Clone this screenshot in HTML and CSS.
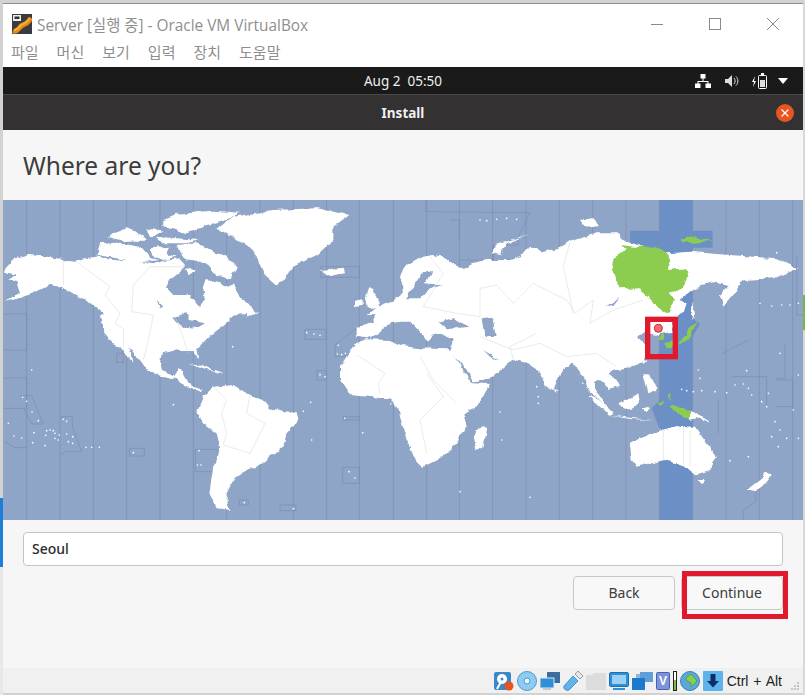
FILE: index.html
```html
<!DOCTYPE html>
<html lang="en">
<head>
    <meta charset="UTF-8">
    <title>Server [실행 중] - Oracle VM VirtualBox</title>
    <link rel="stylesheet" href="styles.css">
</head>
<body>
<div class="window">
    <div class="titlebar">
        <svg class="app-icon" width="20" height="20" viewBox="0 0 20 20">
            <rect width="20" height="20" fill="#3a3a42"/>
            <path d="M1 17 C6 19 7 12 11 11 C14 10 16 9 19 4" fill="none" stroke="#e8861a" stroke-width="5"/>
            <path d="M2 16 C6 17 7 11 11 10 C14 9 15 8 18 4" fill="none" stroke="#f6b52c" stroke-width="2"/>
            <rect x="1" y="1" width="8" height="6" fill="#eee"/>
            <rect x="2.500" y="2.500" width="5" height="2.500" fill="#333"/>
        </svg>
        <span class="app-title">Server [실행 중] - Oracle VM VirtualBox</span>
        <div class="win-btns">
            <svg width="12" height="12" viewBox="0 0 12 12"><path d="M0 6.500H12" stroke="#8a8a8a"/></svg>
            <svg width="12" height="12" viewBox="0 0 12 12"><rect x=".5" y=".5" width="11" height="11" fill="none" stroke="#8a8a8a"/></svg>
            <svg width="12" height="12" viewBox="0 0 12 12"><path d="M0 0L12 12M12 0L0 12" stroke="#8a8a8a"/></svg>
        </div>
    </div>
    <ul class="menubar">
        <li>파일</li>
        <li>머신</li>
        <li>보기</li>
        <li>입력</li>
        <li>장치</li>
        <li>도움말</li>
    </ul>

    <div class="topbar">
        <span></span>
        <span class="clock">Aug 2&nbsp; 05:50</span>
        <div class="tray">
            <svg width="16" height="14" viewBox="0 0 16 14"><path d="M5.500 0h5v4.500h-5zM0 9.500h5.500V14H0zM10.500 9.500H16V14h-5.500zM7.500 4.500h1v2.500h5v2.500h-1V8h-9v1.500h-1V7h5z" fill="#fff"/></svg>
            <svg width="14" height="12" viewBox="0 0 14 12"><path d="M0 4h3l4-4v12L3 8H0z" fill="#ddd"/><path d="M9 3c1.500 1.500 1.500 4.500 0 6M11 1.500c2.500 2.500 2.500 6.500 0 9" fill="none" stroke="#ddd"/></svg>
            <svg width="15" height="16" viewBox="0 0 15 16"><path d="M3 3L0 9h2l-1 5 3-6H2z" fill="#fff"/><rect x="6.500" y="2.500" width="8" height="13" rx="1" fill="none" stroke="#fff"/><rect x="9" y="0" width="3" height="2" fill="#fff"/><rect x="8" y="7" width="5" height="7" fill="#ddd"/></svg>
            <svg width="10" height="6" viewBox="0 0 10 6"><path d="M0 0H10L5 6Z" fill="#fff"/></svg>
        </div>
    </div>
    <div class="headerbar">
        <span></span>
        <span class="install-title">Install</span>
        <span class="close-dot">
            <svg width="8" height="8" viewBox="0 0 8 8"><path d="M.5 .5L7.500 7.500M7.500 .5L.5 7.500" stroke="#fff" stroke-width="1.300"/></svg>
        </span>
    </div>

    <div class="content">
        <h1>Where are you?</h1>

        <svg class="map" width="800" height="320" viewBox="9 0 2400 960">
            <defs>
                <filter id="rough" x="0" y="0" width="100%" height="100%" filterUnits="userSpaceOnUse" color-interpolation-filters="sRGB">
                    <feTurbulence type="fractalNoise" baseFrequency="0.035" numOctaves="4" seed="4" result="n"/>
                    <feDisplacementMap in="SourceGraphic" in2="n" scale="16" xChannelSelector="R" yChannelSelector="G"/>
                </filter>
            </defs>
            <rect class="ocean" x="9" y="0" width="2400" height="960"/>
            <g transform="translate(1200 0)">
                <path class="zone" d="M778 0H878V960H778Z M690 92H938V143H690Z M878 355L900 372L878 410Z M755 625L780 600H878V660L866 705L780 690Z"/>
            </g>
            <path class="tz" d="M80 0V960M180 0V960M280 0V960M380 0V960M480 0V960M580 0V960M680 0V960M780 0V960M880 0V960M980 0V960M1078 0V960M1180 0V960M1280 0V960M1378 0V960M1478 0V960M1578 0V960M1678 0V960M1778 0V960M1878 0V960M1978 0V960M2078 0V960M2178 0V960M2278 0V960M2378 0V960"/>
            <path class="tz" d="M9 342H80V450H9M9 534H80V625H9M60 587H95L130 672H95L70 625M182 650H217V680M217 680L245 755H195L182 765M15 725L45 743H80M350 460H370V487H350ZM388 745H433V768H388ZM586 748H655M586 748V815H635M915 388H978V418H915ZM950 512H978V540H950ZM1030 650H1078V660H1030ZM1028 802H1078V850H1028ZM1005 435L1070 385M1005 435V470H1040M962 200H1078V232H962ZM840 915H888V932H840ZM718 900H745V915H718Z"/>
            <path class="tz" d="M1278 0V35L1590 38L1555 110V135H1480V180H1378M1378 120V60H1350M2390 170V345H2478M2325 540H2378V620H2325M2195 530H2300V620M2355 430V535H2328M2155 600V700M2268 860V905L2230 930V960M2168 460L2245 420"/>

            <g filter="url(#rough)">
                <g class="land">
                    <!-- americas -->
                    <path d="M12 210L45 175L90 162L190 178L225 182L255 175L290 170L340 180L400 185L470 190L490 182L540 178L558 198L545 212L510 240L498 262L520 285L570 285L600 320L615 300L610 270L620 240L660 250L690 262L702 250L718 290L750 312L760 340L720 340L700 350L680 370L640 400L620 420L590 450L595 478L575 450L530 450L490 460L478 480L490 510L520 528L535 505L548 510L575 560L610 570L602 578L560 560L520 535L480 530L440 510L420 480L385 440L400 490L360 440L340 430L310 395L300 350L312 342L260 300L230 285L180 260L150 255L100 280L40 300L15 305L60 280L50 250L20 240L50 225L15 215Z"/>
                    <path d="M590 630L610 590L640 560L700 555L740 580L790 600L810 625L890 640L895 660L860 700L850 740L810 770L770 800L740 810L700 840L680 880L680 915L692 930L650 925L628 880L640 800L660 740L650 700L620 680L590 640Z"/>
                    <path d="M650 85L700 50L820 30L950 25L1045 45L1000 80L1000 120L960 160L930 175L880 200L850 240L830 255L795 225L770 170L740 130L680 105Z"/>
                    <path d="M965 210L1030 203L1035 220L990 228Z"/>
                    <path d="M530 135L590 130L640 155L680 170L715 205L695 215L690 238L650 225L630 200L590 180L560 175L540 160Z"/>
                    <path d="M300 130L340 125L420 140L450 175L480 180L400 190L350 175L290 165Z"/>
                    <path d="M490 60L530 45L600 35L640 32L720 38L690 55L640 70L600 85L560 100L510 85L490 75Z"/>
                    <path d="M320 110L340 100L380 85L430 105L440 125L380 125Z"/>
                    <path d="M470 110L530 115L600 120L560 130L480 130Z"/>
                    <path d="M450 145L510 140L500 160L530 170L490 180L450 165Z"/>
                    <path d="M440 85L490 95L450 112ZM560 205L590 210L570 225ZM745 315L775 340L740 350Z"/>
                    <path d="M565 490L610 495L650 515L600 500ZM645 510L670 518L645 518Z"/>
                    <path d="M1065 300L1088 295L1088 315L1065 318ZM1095 290L1105 265L1120 270L1140 320L1100 325Z"/>
                </g>
                <g class="land" transform="translate(1200 0)">
                    <!-- eurasia, africa, oceania -->
                    <path d="M-130 380L-100 375L-80 365L-70 345L-100 345L-70 320L-30 305L0 290L10 260L0 230L20 195L60 172L100 165L130 170L160 195L200 205L215 190L260 180L330 180L365 170L390 140L415 150L425 160L465 150L510 125L590 100L650 100L680 125L800 160L870 155L990 165L1060 170L1130 175L1195 205L1160 220L1120 235L1025 240L1000 285L970 320L960 285L985 255L950 245L905 255L865 280L838 300L860 310L850 340L830 355L820 365L815 395L770 405L730 395L715 410L745 440L730 490L690 505L650 510L625 520L650 540L660 560L625 570L600 540L585 550L590 575L625 625L590 590L570 575L555 535L520 490L480 520L460 570L440 560L415 510L385 490L340 480L325 490L280 530L220 548L195 500L150 455L165 415L100 400L85 425L65 400L30 365L0 365L-30 370L-60 395L-95 415L-130 410Z"/>
                    <path d="M-180 500L-135 430L-100 418L-30 420L0 437L60 445L145 448L165 470L215 550L270 552L232 620L190 640L200 680L160 740L130 770L70 800L50 790L20 720L10 690L-5 625L-30 595L-100 590L-150 585L-180 540Z"/>
                    <path d="M275 160L290 135L385 102L320 130L300 165ZM540 60L575 55L600 75L555 80ZM220 720L230 690L262 680L250 740L225 748Z"/>
                    <path d="M690 730L750 700L790 690L830 675L870 680L885 680L920 730L950 770L930 810L885 825L850 800L830 790L790 780L710 800L695 780Z"/>
                    <path d="M1040 870L1085 835L1100 815L1115 825L1085 860L1060 875ZM892 840L915 840L905 855Z"/>
                    <path d="M565 585L600 600L640 640L625 645ZM625 645L700 655L760 660L690 657ZM655 610L715 580L720 610L690 630ZM730 520L745 520L770 570L745 580ZM725 625L750 620L740 640ZM870 630L930 665L890 655L870 660ZM875 305L885 340L878 360L872 340ZM460 565L472 570L466 582ZM732 480L742 482L733 495Z"/>
                </g>
                <g class="water" transform="translate(1200 0)">
                    <path d="M15 295L40 260L70 215L100 210L75 250L125 255L85 270L60 295Z"/>
                    <path d="M115 365L165 355L205 380L140 388Z"/>
                    <path d="M245 355L280 350L290 410L255 412Z"/>
                    <path d="M250 450L300 482L270 470Z"/>
                    <path d="M620 318L660 290L640 315Z"/>
                </g>
                <path class="water" d="M470 300L490 320L480 325ZM520 350L560 340L570 360L615 370L590 385L560 380L545 380Z"/>
                <g transform="translate(1200 0)">
                    <path class="green" d="M665 135L700 140L760 140L790 150L815 180L800 210L860 205L865 230L850 260L810 280L825 300L805 335L790 335L750 300L720 262L660 265L635 210L640 175L680 150Z"/>
                    <path class="green" d="M845 115L890 112L935 122L885 128L850 125ZM772 420L790 400L795 420L775 425ZM795 430L820 420L815 440L800 445ZM835 425L860 405L870 380L895 365L880 390L868 420L840 430ZM805 615L870 630L870 660L830 640ZM775 605L790 600L785 615ZM805 585L815 580L812 600Z"/>
                </g>
            </g>

            <path class="border" d="M190 178V255M225 182L330 260L315 285L360 340L345 370L370 385L370 440M400 255L395 335L460 345L445 420L430 480M450 200L400 255M450 200H550M525 350L545 400L565 460M640 560L680 600L665 640L680 700L670 735L750 760L795 670L740 640L750 585M1070 465L1155 520L1135 550L1140 580"/>
            <path class="border" transform="translate(1200 0)" d="M90 170L130 220L70 320L170 340L240 350L240 265L290 255L340 310L400 250L500 300L525 340L580 300L570 370L640 330L730 300M240 410L340 450L420 430L500 470L590 460L650 500M340 480L330 440L410 400M80 520L130 590L60 660L80 760M60 470L100 540L170 610M790 690V780M850 680V800M870 800V690M510 125L490 200L520 340"/>

            <path class="dots" d="M95 510h.1M698 440h.1M68 592h.1M80 604h.1M96 636h.1M115 662h.1M25 670h.1M42 708h.1M65 714h.1M98 728h.1M102 698h.1M135 737h.1M140 692h.1M150 690h.1M160 692h.1M165 700h.1M178 705h.1M137 706h.1M165 715h.1M175 720h.1M200 702h.1M218 710h.1M205 725h.1M218 730h.1M190 658h.1M200 664h.1M258 742h.1M275 742h.1M298 742h.1M400 758h.1M597 752h.1M592 795h.1M603 795h.1M520 614h.1M920 398h.1M942 402h.1M960 406h.1M1015 436h.1M1012 462h.1M1025 464h.1M1036 460h.1M960 524h.1M975 530h.1M932 607h.1M910 634h.1M1034 655h.1M1088 698h.1M935 720h.1M1047 815h.1M1065 834h.1M733 908h.1M880 926h.1M1172 612h.1"/>
            <path class="dots" transform="translate(1200 0)" d="M240 60h.1M260 62h.1M290 58h.1M320 55h.1M350 58h.1M1080 310h.1M1115 318h.1M1145 315h.1M1170 315h.1M1195 310h.1M1130 158h.1M895 510h.1M900 535h.1M845 568h.1M860 572h.1M880 575h.1M905 572h.1M945 575h.1M980 578h.1M1005 555h.1M1030 552h.1M1045 565h.1M1055 585h.1M1105 580h.1M1040 512h.1M1085 605h.1M1100 620h.1M1140 460h.1M1195 525h.1M1125 665h.1M1140 690h.1M1115 710h.1M1160 715h.1M1195 715h.1M1135 740h.1M1045 770h.1M990 782h.1M1180 630h.1M300 636h.1M305 720h.1M180 875h.1M390 892h.1M410 560h.1M415 590h.1M415 610h.1M548 550h.1"/>

            <!-- pin and annotation -->
            <g transform="translate(1200 0)">
                <path d="M775 395V408" stroke="#fff" stroke-width="3"/>
                <circle cx="775" cy="385" r="12" fill="#ee6b73" stroke="#c92a34" stroke-width="3"/>
                <rect class="mark" x="743" y="358" width="83" height="112"/>
            </g>
        </svg>

        <div class="entry">Seoul</div>
        <div class="buttons">
            <button class="btn">Back</button>
            <button class="btn btn-next">Continue</button>
        </div>
    </div>

    <div class="statusbar">
        <svg width="20" height="20" viewBox="0 0 20 20"><rect y="1" width="17" height="18" rx="2" fill="#3a87c9"/><circle cx="8" cy="8" r="5" fill="#fff"/><path d="M8 9L3 18" stroke="#fff" stroke-width="2"/><circle cx="8" cy="8" r="1.500" fill="#3a87c9"/><circle cx="15" cy="15" r="4.500" fill="#e8541f"/></svg>
        <svg width="20" height="20" viewBox="0 0 20 20"><circle cx="10" cy="10" r="9.500" fill="#8ecbf0" stroke="#4d9ad6"/><circle cx="10" cy="10" r="3" fill="#eaf6fd" stroke="#4d9ad6"/></svg>
        <svg width="20" height="20" viewBox="0 0 20 20"><rect x="7" y="1" width="13" height="11" fill="#3d6f9e"/><rect y="7" width="14" height="10" fill="#2f8fd8" stroke="#dfe8ef"/><rect x="3" y="17" width="8" height="2" fill="#c8c8c8"/></svg>
        <svg width="20" height="20" viewBox="0 0 20 20"><path d="M1 15L10 5L15 10L6 19C3 20 0 18 1 15Z" fill="#62b3ea" stroke="#2f7fc0" stroke-width=".8"/><path d="M12 3L15 0L20 5L17 8Z" fill="#e8e8e8" stroke="#888" stroke-width=".8"/></svg>
        <svg width="20" height="20" viewBox="0 0 20 20"><path d="M0 4L6 4L8 2H19Q20 2 20 3V19H0Z" fill="#dcdcdc"/></svg>
        <svg width="20" height="20" viewBox="0 0 20 20"><rect x=".5" y="1.500" width="19" height="14" rx="1.500" fill="#2f8fd8" stroke="#1e6fae"/><rect x="3" y="4" width="14" height="9" fill="#9ad2f5"/><path d="M4 18H16" stroke="#2f8fd8" stroke-width="2"/></svg>
        <svg width="21" height="20" viewBox="0 0 21 20"><rect x="8" y="1" width="13" height="10" fill="#5f9ed8"/><rect x="4" y="3" width="4" height="6" fill="#8ab8e0"/><rect y="7" width="13" height="12" fill="#1e78cc"/></svg>
        <svg width="14" height="20" viewBox="0 0 14 20"><rect x=".5" y="1.500" width="13" height="17" rx="1" fill="#7c93dc" stroke="#4a60b0"/><text class="chip-v" x="7" y="14" text-anchor="middle">V</text></svg>
        <svg width="4" height="20" viewBox="0 0 4 20"><rect x=".5" y=".5" width="3" height="19" fill="#fff" stroke="#222"/><rect x="1" y="9" width="2" height="10" fill="#79c04a"/></svg>
        <svg width="20" height="20" viewBox="0 0 20 20"><circle cx="10" cy="10" r="9.500" fill="#5ba6dc" stroke="#3d7fb4"/><path d="M6 7L11 3L17 10L11 16L11 12L6 9Z" fill="#86d04e" stroke="#4f9e2a" stroke-width=".8"/></svg>
        <svg width="20" height="20" viewBox="0 0 20 20"><rect width="20" height="20" rx="1" fill="#5db4ec"/><path d="M7.500 3h5v7h3.500l-6 6.500-6-6.500h3.500z" fill="#0d2d66"/></svg>
        <span class="hostkey">Ctrl + Alt</span>
        <svg class="grip" width="10" height="10" viewBox="0 0 10 10"><path d="M7 1h2v2H7zM4 4h2v2H4zM7 4h2v2H7zM1 7h2v2H1zM4 7h2v2H4zM7 7h2v2H7z" fill="#c4c4c4"/></svg>
    </div>
</div>
</body>
</html>
```

FILE: styles.css
```css
*{
    margin: 0;
    padding: 0;
    box-sizing: border-box;
}
ul{
    list-style: none;
}
html, body{
    height: 100%;
    overflow: hidden;
}
body{
    background-color: #d2d2d2;
    background-image:
        linear-gradient(to bottom, #d2d2d2 498px, #1e7fd8 498px, #1e7fd8 567px, #e8e8e8 567px),
        linear-gradient(to bottom, #d8d8d8 295px, #7ab648 295px, #7ab648 330px, #d8d8d8 330px),
        linear-gradient(to bottom, #8c8c8c, #8c8c8c);
    background-size: 3px 100%, 2px 100%, 100% 1px;
    background-position: left top, right top, left 3px;
    background-repeat: no-repeat;
    font-family: "Open Sans", "Noto Sans CJK KR", sans-serif;
}
.window{
    width: 800px;
    height: 689px;
    margin: 4px 0 0 3px;
    display: flex;
    flex-direction: column;
    background: #fff;
}
.titlebar{
    height: 36px;
    display: flex;
    align-items: center;
    padding: 0 24px 0 9px;
    flex: none;
}
.app-icon{
    margin-top: 4px;
}
.app-title{
    margin-left: 5px;
    margin-top: 4px;
    font-size: 15.400px;
    color: #8f8f8f;
}
.win-btns{
    margin-left: auto;
    margin-top: 4px;
    display: flex;
    gap: 46px;
}
.menubar{
    height: 27px;
    display: flex;
    gap: 18px;
    padding: 1px 0 0 8px;
    font-family: "Noto Sans CJK KR", sans-serif;
    font-size: 15px;
    color: #8f8f8f;
    flex: none;
}
.topbar, .headerbar{
    display: grid;
    grid-template-columns: 1fr auto 1fr;
    align-items: center;
    flex: none;
    font-family: "Noto Sans", sans-serif;
}
.topbar{
    height: 27px;
    background: #1a1a1a;
    color: #eee;
    font-size: 13.500px;
}
.tray{
    display: flex;
    justify-content: flex-end;
    align-items: center;
    gap: 13px;
    padding-right: 15px;
}
.tray svg:first-child{
    margin-right: 1px;
    margin-left: 2px;
}
.tray svg:last-child{
    margin-left: -2px;
}
.headerbar{
    height: 36px;
    background: #333131;
    border-top: 1px solid #4a4848;
    color: #f0f0f0;
}
.install-title{
    font-size: 13.500px;
    font-weight: 700;
}
.close-dot{
    justify-self: end;
    width: 18px;
    height: 18px;
    margin-right: 9px;
    border-radius: 50%;
    background: #e95420;
    display: flex;
    align-items: center;
    justify-content: center;
}
.content{
    flex: 1;
    background: #f6f6f6;
    display: flex;
    flex-direction: column;
    font-family: "Noto Sans", sans-serif;
}
h1{
    height: 70px;
    padding: 19px 0 0 20px;
    font-size: 24.500px;
    line-height: 33px;
    font-weight: 400;
    color: #3c3c3c;
}
.map{
    display: block;
    flex: none;
}
.ocean{
    fill: #8fa5c8;
}
.zone{
    fill: #6c90c6;
}
.tz{
    fill: none;
    stroke: #7b8dab;
    stroke-width: 2;
}
.land{
    fill: #fff;
}
.water{
    fill: #8fa5c8;
}
.border{
    fill: none;
    stroke: #d4d4d4;
    stroke-width: 1.500;
}
.green{
    fill: #8ccd50;
}
.dots{
    fill: none;
    stroke: #fff;
    stroke-width: 5;
    stroke-linecap: round;
}
.mark{
    fill: none;
    stroke: #e2192d;
    stroke-width: 16;
}
.entry{
    height: 34px;
    margin: 12px 20px 0;
    padding-left: 8px;
    background: #fff;
    border: 1px solid #c4c4c4;
    border-radius: 4px;
    font-size: 14px;
    font-weight: 500;
    line-height: 32px;
    color: #2c2c2c;
}
.buttons{
    display: flex;
    justify-content: flex-end;
    gap: 6px;
    margin: 10px 20px 0;
}
.btn{
    position: relative;
    width: 102px;
    height: 34px;
    padding-bottom: 2px;
    background: #f8f8f8;
    border: 1px solid #c8c8c8;
    border-radius: 4px;
    font-family: "Noto Sans", sans-serif;
    font-size: 14px;
    color: #3c3c3c;
}
.btn-next::after{
    content: "";
    position: absolute;
    top: -6px;
    bottom: -10px;
    left: 0;
    right: -6px;
    border: 5px solid #e2192d;
}
.statusbar{
    margin-top: auto;
    height: 25px;
    flex: none;
    background: #f0f0f0;
    display: flex;
    justify-content: flex-end;
    align-items: center;
    gap: 3px;
    padding-right: 3px;
}
.hostkey{
    margin-left: 1px;
    font-family: "Liberation Sans", sans-serif;
    font-size: 14px;
    word-spacing: 1px;
    color: #222;
}
.grip{
    margin-left: 5px;
    align-self: flex-end;
    margin-bottom: 2px;
}
.chip-v{
    font-family: "Liberation Sans", sans-serif;
    font-size: 12px;
    font-weight: 700;
    fill: #fff;
}
```
